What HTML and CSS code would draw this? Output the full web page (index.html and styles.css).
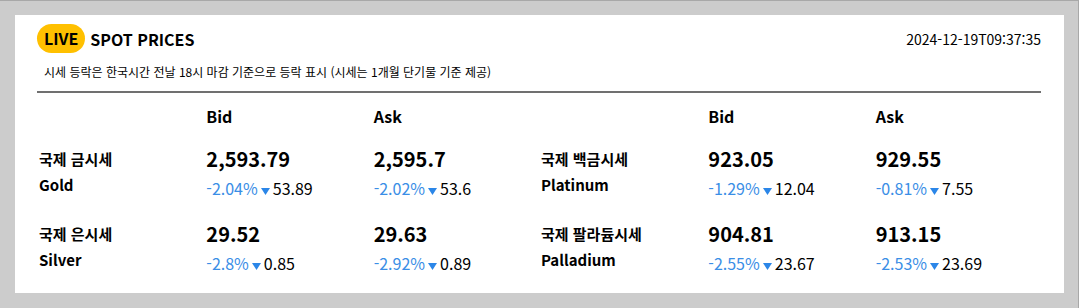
FILE: index.html
```html
<!DOCTYPE html>
<html lang="ko">
<head>
<meta charset="utf-8">
<title>Spot Prices</title>
<link rel="stylesheet" href="styles.css">
</head>
<body>
<div class="card">
  <div class="head">
    <div class="title"><span class="badge">LIVE</span><span class="title-text">SPOT PRICES</span></div>
    <div class="stamp">2024-12-19T09:37:35</div>
  </div>
  <p class="note">시세 등락은 한국시간 전날 18시 마감 기준으로 등락 표시 (시세는 1개월 단기물 기준 제공)</p>
  <div class="grid">
    <div class="cell"></div>
    <div class="cell colhead">Bid</div>
    <div class="cell colhead">Ask</div>
    <div class="cell"></div>
    <div class="cell colhead">Bid</div>
    <div class="cell colhead">Ask</div>

    <div class="cell metal"><div class="ko">국제 금시세</div><div class="en">Gold</div></div>
    <div class="cell price"><div class="val">2,593.79</div><div class="chg"><span class="pct">-2.04%</span><svg class="tri" viewBox="0 0 9 7"><polygon points="0,0 9,0 4.5,7"/></svg><span>53.89</span></div></div>
    <div class="cell price"><div class="val">2,595.7</div><div class="chg"><span class="pct">-2.02%</span><svg class="tri" viewBox="0 0 9 7"><polygon points="0,0 9,0 4.5,7"/></svg><span>53.6</span></div></div>
    <div class="cell metal"><div class="ko">국제 백금시세</div><div class="en">Platinum</div></div>
    <div class="cell price"><div class="val">923.05</div><div class="chg"><span class="pct">-1.29%</span><svg class="tri" viewBox="0 0 9 7"><polygon points="0,0 9,0 4.5,7"/></svg><span>12.04</span></div></div>
    <div class="cell price"><div class="val">929.55</div><div class="chg"><span class="pct">-0.81%</span><svg class="tri" viewBox="0 0 9 7"><polygon points="0,0 9,0 4.5,7"/></svg><span>7.55</span></div></div>

    <div class="cell metal"><div class="ko">국제 은시세</div><div class="en">Silver</div></div>
    <div class="cell price"><div class="val">29.52</div><div class="chg"><span class="pct">-2.8%</span><svg class="tri" viewBox="0 0 9 7"><polygon points="0,0 9,0 4.5,7"/></svg><span>0.85</span></div></div>
    <div class="cell price"><div class="val">29.63</div><div class="chg"><span class="pct">-2.92%</span><svg class="tri" viewBox="0 0 9 7"><polygon points="0,0 9,0 4.5,7"/></svg><span>0.89</span></div></div>
    <div class="cell metal"><div class="ko">국제 팔라듐시세</div><div class="en">Palladium</div></div>
    <div class="cell price"><div class="val">904.81</div><div class="chg"><span class="pct">-2.55%</span><svg class="tri" viewBox="0 0 9 7"><polygon points="0,0 9,0 4.5,7"/></svg><span>23.67</span></div></div>
    <div class="cell price"><div class="val">913.15</div><div class="chg"><span class="pct">-2.53%</span><svg class="tri" viewBox="0 0 9 7"><polygon points="0,0 9,0 4.5,7"/></svg><span>23.69</span></div></div>
  </div>
</div>
</body>
</html>
```
FILE: styles.css
```css
html {
  background: #cccccc;
}
body {
  margin: 0;
  padding: 14px 14px 15px 15px;
  border-top: 1px solid #a8a8a8;
  border-right: 1px solid #a8a8a8;
  background: #cccccc;
  font-family: "Noto Sans CJK KR", "Noto Sans", sans-serif;
  color: #000;
}
.card {
  background: #fff;
  height: 278px;
  box-sizing: border-box;
  padding: 9px 23px 0 22px;
}
.head {
  display: flex;
  justify-content: space-between;
  align-items: center;
  height: 29px;
}
.title {
  display: flex;
  align-items: center;
}
.badge {
  display: inline-block;
  background: #ffc000;
  height: 29px;
  line-height: 29px;
  border-radius: 15px;
  padding: 0 7px;
  font-weight: 700;
  font-size: 16px;
}
.title-text {
  margin-left: 5px;
  font-weight: 700;
  font-size: 16px;
}
.stamp {
  font-size: 14px;
  line-height: 20px;
}
.note {
  margin: 11px 0 0;
  padding-left: 7px;
  font-size: 12px;
  line-height: 16px;
  padding-bottom: 11px;
  border-bottom: 2px solid #707070;
}
.grid {
  display: grid;
  grid-template-columns: repeat(6, 1fr);
  row-gap: 16px;
  margin-top: 12px;
}
.cell {
  padding-left: 2px;
}
.colhead {
  font-weight: 700;
  font-size: 16px;
  line-height: 22px;
}
.ko {
  font-weight: 700;
  font-size: 15px;
  line-height: 32px;
}
.en {
  font-weight: 700;
  font-size: 15px;
  line-height: 20px;
}
.val {
  font-weight: 700;
  font-size: 20px;
  line-height: 32px;
}
.chg {
  font-size: 16px;
  line-height: 27px;
  display: flex;
  align-items: baseline;
}
.pct {
  color: #3a8ee6;
}
.tri {
  width: 9px;
  height: 7px;
  fill: #2b86e8;
  margin: 0 3px 0 3px;
  align-self: baseline;
}
```
